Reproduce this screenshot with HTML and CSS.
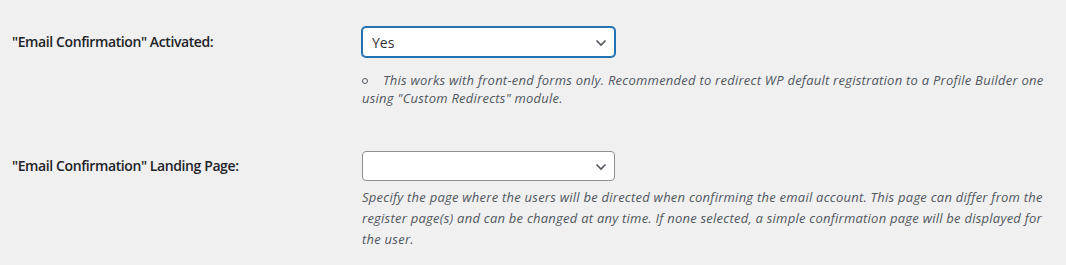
FILE: index.html
```html
<!DOCTYPE html>
<html lang="en">
<head>
  <meta charset="UTF-8" />
  <title>Profile Builder - General Settings</title>
  <link rel="stylesheet" href="styles.css">
</head>
<body>
  <div class="form-table">
    <!-- Email confirmation on/off -->
    <div class="form-row">
      <div class="row-label">"Email Confirmation" Activated:</div>
      <div class="row-field">
        <div class="select-wrap is-focused">
          <select class="wppb-select">
            <option selected>Yes</option>
            <option>No</option>
          </select>
          <svg class="select-arrow" width="12" height="8" viewBox="0 0 12 8"><path d="M1.5 1.5 6 6l4.5-4.5" fill="none" stroke="#50575e" stroke-width="1.6"/></svg>
        </div>
        <ul class="field-notes">
          <li>This works with front-end forms only. Recommended to redirect WP default registration to a Profile Builder one using "Custom Redirects" module.</li>
        </ul>
      </div>
    </div>

    <!-- Landing page after confirmation -->
    <div class="form-row">
      <div class="row-label">"Email Confirmation" Landing Page:</div>
      <div class="row-field">
        <div class="select-wrap">
          <select class="wppb-select">
            <option selected></option>
          </select>
          <svg class="select-arrow" width="12" height="8" viewBox="0 0 12 8"><path d="M1.5 1.5 6 6l4.5-4.5" fill="none" stroke="#50575e" stroke-width="1.6"/></svg>
        </div>
        <p class="description">Specify the page where the users will be directed when confirming the email account. This page can differ from the register page(s) and can be changed at any time. If none selected, a simple confirmation page will be displayed for the user.</p>
      </div>
    </div>
  </div>
</body>
</html>
```

FILE: styles.css
```css
/* Fundo e fonte do painel */
body {
  margin: 0;
  background-color: #f0f0f1;
  color: #1d2327;
  font-family: "Segoe UI", "Open Sans", sans-serif;
  font-size: 14px;
  padding: 27px 12px 0 12px;
}

.form-table {
  display: flex;
  flex-direction: column;
  gap: 44px;
}

.form-row {
  display: grid;
  grid-template-columns: 350px 1fr;
}

.row-label {
  font-weight: 600;
  letter-spacing: -0.4px;
  line-height: 30px;
}

.row-field {
  padding-right: 4px;
}

/* Select no estilo do WP admin */
.select-wrap {
  position: relative;
  width: 253px;
}

.wppb-select {
  appearance: none;
  -webkit-appearance: none;
  display: block;
  width: 100%;
  height: 30px;
  margin: 0;
  padding: 0 24px 0 9px;
  font-family: inherit;
  font-size: 14px;
  color: #2c3338;
  background-color: #fff;
  border: 1px solid #8c8f94;
  border-radius: 4px;
  box-sizing: border-box;
  outline: none;
}

.is-focused .wppb-select {
  border-color: #2271b1;
  box-shadow: 0 0 0 1px #2271b1;
}

.select-arrow {
  position: absolute;
  right: 8px;
  top: 12px;
  pointer-events: none;
}

/* Textos de ajuda */
.field-notes {
  margin: 14px 0 0 0;
  padding: 0;
  list-style: none;
}

.field-notes li {
  font-size: 13px;
  font-style: italic;
  letter-spacing: 0.24px;
  color: #50575e;
  line-height: 18px;
}

.field-notes li::before {
  content: "";
  display: inline-block;
  width: 4px;
  height: 4px;
  border: 1px solid #50575e;
  border-radius: 50%;
  margin: 0 15px 2px 0;
  vertical-align: middle;
}

.description {
  margin: 6px 0 0 0;
  font-size: 13px;
  font-style: italic;
  letter-spacing: 0.24px;
  color: #50575e;
  line-height: 21px;
}
```
